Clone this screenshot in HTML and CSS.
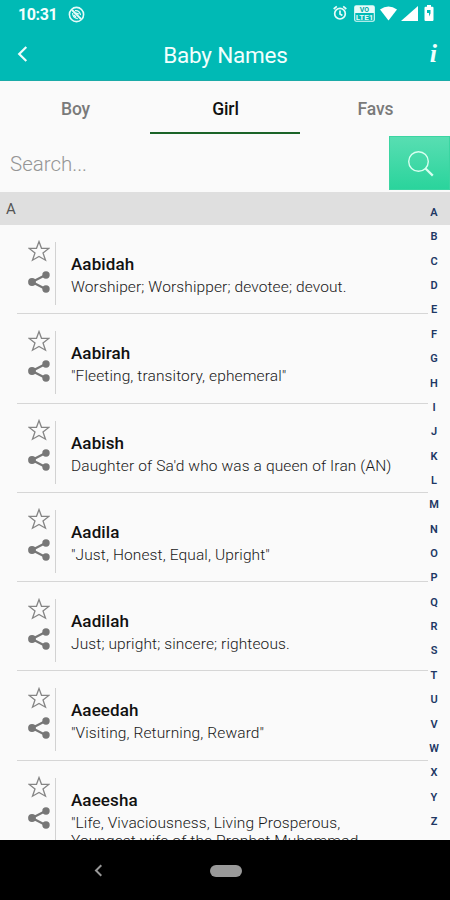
FILE: index.html
```html
<!DOCTYPE html>
<html lang="en">
<head>
<meta charset="utf-8">
<meta name="viewport" content="width=device-width, initial-scale=1">
<title>Baby Names</title>
<link rel="stylesheet" href="styles.css">
</head>
<body>
<svg width="0" height="0" class="defs" aria-hidden="true">
  <symbol id="star" viewBox="0 0 22 22"><path d="M11 1.6 13.5 8.3 20.8 8.4 15 12.9 17.5 20.2 11 16.5 4.5 20.2 7 12.9 1.2 8.4 8.5 8.3Z" fill="none" stroke="#858585" stroke-width="1.3"/></symbol>
  <symbol id="share" viewBox="0 0 22 22"><path d="M18 3.8 4 11 18 18.2" fill="none" stroke="#777" stroke-width="2.2"/><g fill="#777"><circle cx="18" cy="4" r="3.7"/><circle cx="4" cy="11" r="3.9"/><circle cx="18" cy="18" r="3.7"/></g></symbol>
</svg>
<div class="phone">
  <header class="top">
    <div class="status">
      <span class="clock">10:31</span>
      <svg class="nosync" width="17" height="17" viewBox="0 0 17 17" fill="none" stroke="#e6fbf9"><circle cx="8.5" cy="8.5" r="7.1" stroke-width="1.6"/><path d="M4 4 13 13" stroke-width="1.8"/><path d="M7 4.6Q11.5 4 12.6 9M4.6 7Q4.5 12 9.8 12.6M8 7 11 8M6 9 8 11" stroke-width="1.2"/></svg>
      <div class="signals">
        <svg width="14" height="16" viewBox="0 0 14 16" fill="none" stroke="#e6fbf9" stroke-width="1.7"><circle cx="7" cy="8.7" r="5.3"/><path d="M7 5.5V9L9.4 10.5M.7 4 3.8 1.4M13.3 4 10.2 1.4"/></svg>
        <svg width="21" height="17" viewBox="0 0 21 17"><rect x=".7" y=".7" width="19.6" height="15.6" rx="1.5" fill="#00bab5" stroke="#e6fbf9" stroke-width="1.1"/><path d="M1 1H20V8H1Z" fill="#e6fbf9"/><text x="10.5" y="6.8" class="vo">VO</text><text x="10.5" y="15" class="lte">LTE1</text></svg>
        <svg width="17" height="15" viewBox="0 0 17 15"><path d="M0 3.5Q8.500-2.500 17 3.500L8.500 14.500Z" fill="#fff"/></svg>
        <svg width="17" height="15" viewBox="0 0 17 15"><path d="M17 0V15H0Z" fill="#fff"/></svg>
        <svg width="10" height="16" viewBox="0 0 10 16"><path d="M3 0H7V1.700H8.500Q9.500 1.700 9.500 3V14.700Q9.500 16 8.500 16H1.500Q.5 16 .5 14.700V3Q.5 1.700 1.500 1.700H3Z" fill="#fff"/><path d="M3 5H6.500V8.500L5 11.500V8H3Z" fill="#00bab5"/></svg>
      </div>
    </div>
    <div class="bar">
      <svg class="back" width="12" height="18" viewBox="0 0 12 18"><path d="M9.300 2 2.200 9 9.300 16" fill="none" stroke="#eefdfc" stroke-width="2.200"/></svg>
      <h1>Baby Names</h1>
      <span class="info">i</span>
    </div>
  </header>
  <nav class="tabs"><span>Boy</span><span class="active">Girl</span><span>Favs</span></nav>
  <div class="search">
    <span class="hint">Search...</span>
    <div class="go"><svg width="28" height="28" viewBox="0 0 28 28" fill="none" stroke="#d8fff0"><circle cx="11.500" cy="11.500" r="9.800" stroke-width="1.400"/><path d="M18.500 18.500 25.800 25.600" stroke-width="2.200"/></svg></div>
  </div>
  <main class="content">
    <div class="section">A</div>
    <div class="list">
      <article><div class="acts"><svg><use href="#star"/></svg><svg><use href="#share"/></svg></div><div class="txt"><h2>Aabidah</h2><p>Worshiper; Worshipper; devotee; devout.</p></div></article>
      <article><div class="acts"><svg><use href="#star"/></svg><svg><use href="#share"/></svg></div><div class="txt"><h2>Aabirah</h2><p>"Fleeting, transitory, ephemeral"</p></div></article>
      <article><div class="acts"><svg><use href="#star"/></svg><svg><use href="#share"/></svg></div><div class="txt"><h2>Aabish</h2><p>Daughter of Sa'd who was a queen of Iran (AN)</p></div></article>
      <article><div class="acts"><svg><use href="#star"/></svg><svg><use href="#share"/></svg></div><div class="txt"><h2>Aadila</h2><p>"Just, Honest, Equal, Upright"</p></div></article>
      <article><div class="acts"><svg><use href="#star"/></svg><svg><use href="#share"/></svg></div><div class="txt"><h2>Aadilah</h2><p>Just; upright; sincere; righteous.</p></div></article>
      <article><div class="acts"><svg><use href="#star"/></svg><svg><use href="#share"/></svg></div><div class="txt"><h2>Aaeedah</h2><p>"Visiting, Returning, Reward"</p></div></article>
      <article class="last"><div class="acts"><svg><use href="#star"/></svg><svg><use href="#share"/></svg></div><div class="txt"><h2>Aaeesha</h2><p>"Life, Vivaciousness, Living Prosperous,<br>Youngest wife of the Prophet Muhammad</p></div></article>
    </div>
    <div class="index"><span>A</span><span>B</span><span>C</span><span>D</span><span>E</span><span>F</span><span>G</span><span>H</span><span>I</span><span>J</span><span>K</span><span>L</span><span>M</span><span>N</span><span>O</span><span>P</span><span>Q</span><span>R</span><span>S</span><span>T</span><span>U</span><span>V</span><span>W</span><span>X</span><span>Y</span><span>Z</span></div>
  </main>
  <footer class="nav">
    <svg width="9" height="13" viewBox="0 0 9 13"><path d="M7.300 1.300 2 6.500 7.300 11.700" fill="none" stroke="#989898" stroke-width="2"/></svg>
    <span class="pill"></span>
  </footer>
</div>
</body>
</html>
```
FILE: styles.css
```css
* { box-sizing: border-box; margin: 0; padding: 0; }
body { font-family: Roboto, sans-serif; background: #fafafa; }
svg { display: block; flex: none; }
.defs { position: absolute; }
.phone { width: 450px; height: 900px; display: flex; flex-direction: column; overflow: hidden; }
.top { height: 81px; flex: none; background: #00bab5; color: #f2fffe; border-bottom: 1px solid #1aaba8; }
.status { height: 28px; display: flex; align-items: center; padding: 0 16px 0 18px; }
.clock { font-size: 16px; font-weight: 700; width: 50px; letter-spacing: -.4px; padding-top: 1px; }
.signals { margin-left: auto; display: flex; align-items: center; gap: 7px; padding-bottom: 2px; }
.signals svg:nth-child(3) { margin-left: -2px; }
.signals svg:nth-child(4) { margin-left: -3px; }
.signals svg:nth-child(5) { margin-left: -1px; }
.vo, .lte { font: 700 7px Roboto, sans-serif; text-anchor: middle; }
.vo { fill: #00a9a4; }
.lte { fill: #e6fbf9; font-size: 8px; }
.bar { height: 52px; display: grid; grid-template-columns: 60px 1fr 60px; align-items: center; }
.back { margin-left: 17px; }
.bar h1 { text-align: center; font-size: 22.500px; font-weight: 400; letter-spacing: -.2px; padding: 1px 0 0 1px; }
.info { font: italic 700 26px "Liberation Serif", serif; text-align: right; padding-right: 13px; }
.tabs { height: 53px; flex: none; display: grid; grid-template-columns: repeat(3, 1fr); }
.tabs span { text-align: center; font-size: 17.500px; font-weight: 500; color: #7a7a7a; line-height: 56px; height: 53px; letter-spacing: -.1px; padding-left: 1px; }
.tabs .active { color: #111; border-bottom: 2px solid #1b6428; }
.search { height: 58px; flex: none; display: flex; justify-content: space-between; align-items: flex-start; padding-top: 2px; }
.hint { font-size: 20.500px; color: #959595; font-weight: 300; line-height: 56px; padding-left: 10px; }
.go { width: 61px; height: 54px; display: flex; align-items: center; justify-content: center; padding-left: 3px; padding-top: 2px; background: linear-gradient(#58deb2, #2ad49c); border: 1px solid #3bd5a2; }
.content { height: 648px; flex: none; position: relative; overflow: hidden; }
.section { height: 33px; background: #dfdfdf; color: #555; font-size: 15px; line-height: 35px; padding-left: 6px; }
.list { padding: 0 22px 0 17px; }
article { height: 89.300px; display: flex; background: linear-gradient(#d6d6d6, #d6d6d6) 0 100% / 100% 1px no-repeat; padding-top: 16px; }
article.last { height: 130px; }
.acts { width: 39px; height: 63px; flex: none; border-right: 1px solid #d2d2d2; padding: 0 0 0 11px; margin-top: 1px; display: flex; flex-direction: column; gap: 8.500px; }
.last .acts { height: 100px; }
.acts svg { width: 22px; height: 22px; margin-top: -1.700px; }
.acts svg + svg { margin-top: 0; }
.txt { padding-left: 15px; padding-top: 12px; white-space: nowrap; }
.txt h2 { font-size: 17px; font-weight: 500; color: #111; line-height: 22px; letter-spacing: .1px; }
.txt p { font-size: 15.500px; font-weight: 300; color: #181818; line-height: 18px; padding-top: 3px; letter-spacing: .12px; }
.index { position: absolute; top: 8px; right: 6px; width: 20px; text-align: center; font-size: 11px; font-weight: 600; color: #203764; }
.index span { display: block; height: 24.360px; line-height: 25px; }
.nav { height: 60px; flex: none; background: #000; display: grid; grid-template-columns: 1fr 32px 1fr; align-items: center; padding-left: 1px; padding-top: 1px; }
.nav svg { margin-left: 93px; }
.pill { height: 12px; border-radius: 6px; background: #999; }
```
